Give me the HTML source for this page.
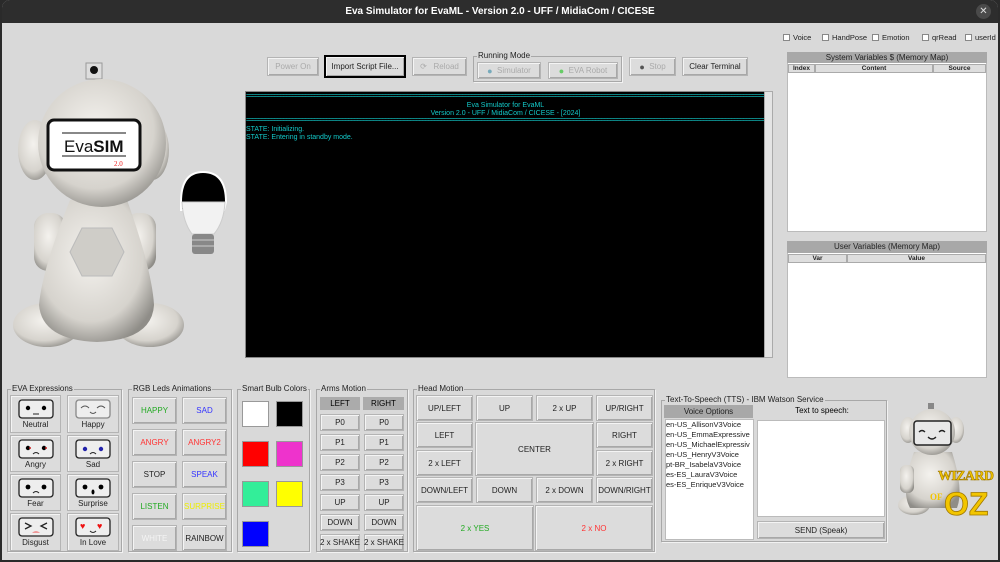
<!DOCTYPE html>
<html><head><meta charset="utf-8">
<style>
*{box-sizing:border-box;margin:0;padding:0}
body{width:1000px;height:562px;background:#2a2a2a;font-family:"Liberation Sans",Arial,sans-serif;overflow:hidden;position:relative}
.win{position:absolute;left:2px;top:0;width:996px;height:560px;background:#d9d9d9;border-radius:8px 8px 0 0;overflow:hidden}
.title{position:absolute;left:0;top:0;width:996px;height:23px;background:#2d2d2d;color:#fff;font-weight:bold;font-size:10px;text-align:center;line-height:23px}
.close{position:absolute;right:7px;top:4px;width:15px;height:15px;border-radius:50%;background:#4a4a4a;color:#ddd;font-size:10px;line-height:15px;text-align:center;font-weight:normal}
.a{position:absolute}
.btn{position:absolute;background:#dcdcdc;border:1px solid #b4b4b4;box-shadow:inset 1px 1px 0 #f4f4f4,inset -1px -1px 0 #a8a8a8;font-size:8px;color:#222;text-align:center;display:flex;align-items:center;justify-content:center;white-space:nowrap}
.dis{color:#aaa}
.grp{position:absolute;border:1px solid #a8a8a8;box-shadow:1px 1px 0 #f2f2f2}
.gl{position:absolute;top:-6px;left:3px;background:#d9d9d9;font-size:8px;color:#222;padding:0 1px;white-space:nowrap}
.cb{position:absolute;font-size:7.5px;color:#222;top:33px}
.cb i{display:inline-block;width:7px;height:7px;background:#fff;border:1px solid #888;vertical-align:-1px;margin-right:3px}
.hdr{position:absolute;background:#a8a8a8;color:#222;font-size:8px;text-align:center}
.col{position:absolute;background:#dedede;border:1px solid #aaa;font-size:6.5px;font-weight:bold;text-align:center;color:#222}
.term{position:absolute;left:243px;top:91px;width:521px;height:267px;background:#000;border:1px solid #888;color:#13c9c9;font-size:7px;line-height:8px}
.exp{position:absolute;background:#dcdcdc;border:1px solid #b4b4b4;box-shadow:inset 1px 1px 0 #f4f4f4;font-size:8px;text-align:center;color:#222}
.exp svg{display:block;margin:3px auto 1px}
.sq{position:absolute;width:27px;height:26px;border:1px solid #999}
</style></head><body>
<div class="win">
<div class="title">Eva Simulator for EvaML - Version 2.0 - UFF / MidiaCom / CICESE<div class="close">✕</div></div>

<div class="cb" style="left:781px"><i></i>Voice</div>
<div class="cb" style="left:820px"><i></i>HandPose</div>
<div class="cb" style="left:870px"><i></i>Emotion</div>
<div class="cb" style="left:920px"><i></i>qrRead</div>
<div class="cb" style="left:963px"><i></i>userId</div>

<!-- robot -->
<svg class="a" style="left:0;top:60px" width="240" height="290" viewBox="0 60 240 290">
<defs><radialGradient id="g" cx="45%" cy="40%" r="65%"><stop offset="0" stop-color="#f4f2ee"/><stop offset="0.7" stop-color="#d6d3cd"/><stop offset="1" stop-color="#8f8d88"/></radialGradient></defs>
<rect x="84" y="63" width="16" height="16" fill="#ddd" stroke="#999"/>
<circle cx="92" cy="70" r="4" fill="#111"/>
<ellipse cx="45" cy="325" rx="34" ry="22" fill="url(#g)"/>
<ellipse cx="148" cy="325" rx="34" ry="22" fill="url(#g)"/>
<rect x="32" y="213" width="32" height="58" rx="14" fill="url(#g)"/>
<rect x="122" y="213" width="32" height="58" rx="14" fill="url(#g)"/>
<path d="M68 200 L125 200 Q150 270 152 305 Q150 340 95 342 Q40 340 37 305 Q40 270 68 200Z" fill="url(#g)"/>
<polygon points="80,228 110,228 122,252 110,276 80,276 68,252" fill="#cfcdc8" stroke="#bbb"/>
<ellipse cx="33" cy="150" rx="17" ry="30" fill="url(#g)"/>
<ellipse cx="150" cy="150" rx="17" ry="30" fill="url(#g)"/>
<circle cx="100" cy="143" r="64" fill="url(#g)"/>
<rect x="46" y="120" width="92" height="50" rx="6" fill="#fff" stroke="#111" stroke-width="3"/>
<line x1="60" y1="133" x2="124" y2="133" stroke="#111"/>
<line x1="60" y1="156" x2="124" y2="156" stroke="#111"/>
<text x="62" y="152" font-family="Liberation Sans" font-size="17" fill="#111">Eva<tspan font-weight="bold">SIM</tspan></text>
<text x="112" y="166" font-size="7" fill="#e22" font-family="Liberation Serif">2.0</text>
<path d="M179 202 Q179 172 201 172 Q224 172 224 202 L222 210 L179 210Z" fill="#000" stroke="#fff" stroke-width="2"/>
<path d="M180 202 L223 202 Q222 222 212 234 L190 234 Q181 222 180 202Z" fill="#f2f2f2" stroke="#ccc"/>
<rect x="190" y="234" width="22" height="20" rx="3" fill="#888"/>
<line x1="190" y1="240" x2="212" y2="240" stroke="#ccc"/><line x1="190" y1="246" x2="212" y2="246" stroke="#ccc"/>
</svg>

<div class="btn dis" style="left:265px;top:57px;width:52px;height:19px">Power On</div>
<div class="btn" style="left:322px;top:55px;width:82px;height:23px;border:2px solid #000">Import Script File...</div>
<div class="btn dis" style="left:410px;top:57px;width:55px;height:19px">⟳&nbsp;&nbsp; Reload</div>
<div class="grp" style="left:471px;top:56px;width:149px;height:26px"><div class="gl" style="color:#222">Running Mode</div></div>
<div class="btn dis" style="left:475px;top:62px;width:64px;height:17px"><span style="color:#7ab;font-size:9px">●</span>&nbsp; Simulator</div>
<div class="btn dis" style="left:546px;top:62px;width:70px;height:17px"><span style="color:#6c6;font-size:9px">●</span>&nbsp; EVA Robot</div>
<div class="btn dis" style="left:627px;top:57px;width:47px;height:19px"><span style="color:#555;font-size:9px">●</span>&nbsp; Stop</div>
<div class="btn" style="left:680px;top:57px;width:66px;height:19px">Clear Terminal</div>

<div class="term">
<div style="overflow:hidden;white-space:nowrap;height:6px;line-height:6px;margin-top:2px;letter-spacing:-1px">================================================================================================================================================================================</div>
<div style="text-align:center;margin-top:2px">Eva Simulator for EvaML<br>Version 2.0 - UFF / MidiaCom / CICESE - [2024]</div>
<div style="overflow:hidden;white-space:nowrap;height:6px;line-height:6px;letter-spacing:-1px">================================================================================================================================================================================</div>
<div style="margin-top:2px">STATE: Initializing.<br>STATE: Entering in standby mode.</div>
</div>
<div class="a" style="left:762px;top:91px;width:9px;height:267px;background:#e4e4e4;border:1px solid #aaa"></div>

<div class="a" style="left:785px;top:52px;width:200px;height:180px;background:#fff;border:1px solid #bbb"></div>
<div class="hdr" style="left:785px;top:52px;width:200px;height:11px;line-height:11px">System Variables $ (Memory Map)</div>
<div class="col" style="left:786px;top:64px;width:27px;height:9px">Index</div>
<div class="col" style="left:813px;top:64px;width:118px;height:9px">Content</div>
<div class="col" style="left:931px;top:64px;width:53px;height:9px">Source</div>

<div class="a" style="left:785px;top:241px;width:200px;height:137px;background:#fff;border:1px solid #bbb"></div>
<div class="hdr" style="left:785px;top:241px;width:200px;height:12px;line-height:12px">User Variables (Memory Map)</div>
<div class="col" style="left:786px;top:254px;width:59px;height:9px">Var</div>
<div class="col" style="left:845px;top:254px;width:139px;height:9px">Value</div>

<!-- EVA Expressions -->
<div class="grp" style="left:5px;top:389px;width:115px;height:163px"><div class="gl">EVA Expressions</div></div>
<div class="exp" style="left:8px;top:395px;width:51px;height:38px"><svg width="36" height="20"><rect x="1" y="1" width="34" height="18" rx="3" fill="#eee" stroke="#222" stroke-width="1.3"/><circle cx="10" cy="9" r="2.2"/><circle cx="26" cy="9" r="2.2"/><line x1="15" y1="15" x2="21" y2="15" stroke="#222"/></svg>Neutral</div>
<div class="exp" style="left:65px;top:395px;width:52px;height:38px"><svg width="36" height="20"><rect x="1" y="1" width="34" height="18" rx="3" fill="#eee" stroke="#888" stroke-width="1.3"/><path d="M6 9 Q10 5 14 9 M22 9 Q26 5 30 9 M15 13 Q18 16 21 13" fill="none" stroke="#555"/></svg>Happy</div>
<div class="exp" style="left:8px;top:435px;width:51px;height:37px"><svg width="36" height="20"><rect x="1" y="1" width="34" height="18" rx="3" fill="#eee" stroke="#222" stroke-width="1.3"/><circle cx="10" cy="9" r="2.2"/><circle cx="26" cy="9" r="2.2"/><circle cx="12" cy="9" r="1" fill="#c22"/><circle cx="28" cy="9" r="1" fill="#c22"/><path d="M15 15 Q18 12 21 15" fill="none" stroke="#222"/></svg>Angry</div>
<div class="exp" style="left:65px;top:435px;width:52px;height:37px"><svg width="36" height="20"><rect x="1" y="1" width="34" height="18" rx="3" fill="#eee" stroke="#222" stroke-width="1.3"/><circle cx="10" cy="10" r="2.2" fill="#22a"/><circle cx="26" cy="10" r="2.2" fill="#22a"/><path d="M15 15 Q18 12 21 15" fill="none" stroke="#222"/></svg>Sad</div>
<div class="exp" style="left:8px;top:474px;width:51px;height:37px"><svg width="36" height="20"><rect x="1" y="1" width="34" height="18" rx="3" fill="#eee" stroke="#222" stroke-width="1.3"/><circle cx="10" cy="9" r="2.4"/><circle cx="26" cy="9" r="2.4"/><path d="M15 15 Q18 12 21 15" fill="none" stroke="#222"/></svg>Fear</div>
<div class="exp" style="left:65px;top:474px;width:52px;height:37px"><svg width="36" height="20"><rect x="1" y="1" width="34" height="18" rx="3" fill="#eee" stroke="#222" stroke-width="1.3"/><circle cx="10" cy="9" r="2.4"/><circle cx="26" cy="9" r="2.4"/><ellipse cx="18" cy="14" rx="1.5" ry="2.5"/></svg>Surprise</div>
<div class="exp" style="left:8px;top:513px;width:51px;height:38px"><svg width="36" height="20"><rect x="1" y="1" width="34" height="18" rx="3" fill="#eee" stroke="#222" stroke-width="1.3"/><path d="M7 6 L13 9 L7 12 M29 6 L23 9 L29 12" fill="none" stroke="#222" stroke-width="1.3"/><path d="M14 16 Q18 12 22 16" fill="#e99"/></svg>Disgust</div>
<div class="exp" style="left:65px;top:513px;width:52px;height:38px"><svg width="36" height="20"><rect x="1" y="1" width="34" height="18" rx="3" fill="#eee" stroke="#222" stroke-width="1.3"/><text x="5" y="12" font-size="9" fill="#e11">♥</text><text x="22" y="12" font-size="9" fill="#e11">♥</text><path d="M15 14 Q18 17 21 14" fill="none" stroke="#222"/></svg>In Love</div>

<!-- RGB -->
<div class="grp" style="left:126px;top:389px;width:104px;height:163px"><div class="gl">RGB Leds Animations</div></div>
<div class="btn" style="left:130px;top:397px;width:45px;height:27px;color:#2a2">HAPPY</div>
<div class="btn" style="left:180px;top:397px;width:45px;height:27px;color:#33f">SAD</div>
<div class="btn" style="left:130px;top:429px;width:45px;height:27px;color:#f33">ANGRY</div>
<div class="btn" style="left:180px;top:429px;width:45px;height:27px;color:#f33">ANGRY2</div>
<div class="btn" style="left:130px;top:461px;width:45px;height:27px">STOP</div>
<div class="btn" style="left:180px;top:461px;width:45px;height:27px;color:#33f">SPEAK</div>
<div class="btn" style="left:130px;top:493px;width:45px;height:27px;color:#2a2">LISTEN</div>
<div class="btn" style="left:180px;top:493px;width:45px;height:27px;color:#ee0">SURPRISE</div>
<div class="btn" style="left:130px;top:525px;width:45px;height:26px;color:#f4f4f4">WHITE</div>
<div class="btn" style="left:180px;top:525px;width:45px;height:26px">RAINBOW</div>

<!-- Bulb -->
<div class="grp" style="left:235px;top:389px;width:73px;height:163px"><div class="gl">Smart Bulb Colors</div></div>
<div class="sq" style="left:240px;top:401px;background:#fff"></div>
<div class="sq" style="left:274px;top:401px;background:#000"></div>
<div class="sq" style="left:240px;top:441px;background:#f00"></div>
<div class="sq" style="left:274px;top:441px;background:#e3c"></div>
<div class="sq" style="left:240px;top:481px;background:#3e9"></div>
<div class="sq" style="left:274px;top:481px;background:#ff0"></div>
<div class="sq" style="left:240px;top:521px;background:#00f"></div>

<!-- Arms -->
<div class="grp" style="left:314px;top:389px;width:92px;height:163px"><div class="gl">Arms Motion</div></div>
<div class="a" style="left:318px;top:397px;width:40px;height:13px;background:#ababab;font-size:8px;text-align:center;line-height:13px">LEFT</div>
<div class="a" style="left:361px;top:397px;width:41px;height:13px;background:#ababab;font-size:8px;text-align:center;line-height:13px">RIGHT</div>
<div class="btn" style="left:318px;top:414px;width:40px;height:17px">P0</div><div class="btn" style="left:362px;top:414px;width:40px;height:17px">P0</div>
<div class="btn" style="left:318px;top:434px;width:40px;height:17px">P1</div><div class="btn" style="left:362px;top:434px;width:40px;height:17px">P1</div>
<div class="btn" style="left:318px;top:454px;width:40px;height:17px">P2</div><div class="btn" style="left:362px;top:454px;width:40px;height:17px">P2</div>
<div class="btn" style="left:318px;top:474px;width:40px;height:17px">P3</div><div class="btn" style="left:362px;top:474px;width:40px;height:17px">P3</div>
<div class="btn" style="left:318px;top:494px;width:40px;height:17px">UP</div><div class="btn" style="left:362px;top:494px;width:40px;height:17px">UP</div>
<div class="btn" style="left:318px;top:514px;width:40px;height:17px">DOWN</div><div class="btn" style="left:362px;top:514px;width:40px;height:17px">DOWN</div>
<div class="btn" style="left:318px;top:534px;width:40px;height:17px">2 x SHAKE</div><div class="btn" style="left:362px;top:534px;width:40px;height:17px">2 x SHAKE</div>

<!-- Head -->
<div class="grp" style="left:411px;top:389px;width:242px;height:163px"><div class="gl">Head Motion</div></div>
<div class="btn" style="left:414px;top:395px;width:57px;height:26px">UP/LEFT</div>
<div class="btn" style="left:474px;top:395px;width:57px;height:26px">UP</div>
<div class="btn" style="left:534px;top:395px;width:57px;height:26px">2 x UP</div>
<div class="btn" style="left:594px;top:395px;width:57px;height:26px">UP/RIGHT</div>
<div class="btn" style="left:414px;top:422px;width:57px;height:26px">LEFT</div>
<div class="btn" style="left:473px;top:422px;width:119px;height:54px">CENTER</div>
<div class="btn" style="left:594px;top:422px;width:57px;height:26px">RIGHT</div>
<div class="btn" style="left:414px;top:450px;width:57px;height:26px">2 x LEFT</div>
<div class="btn" style="left:594px;top:450px;width:57px;height:26px">2 x RIGHT</div>
<div class="btn" style="left:414px;top:477px;width:57px;height:26px">DOWN/LEFT</div>
<div class="btn" style="left:474px;top:477px;width:57px;height:26px">DOWN</div>
<div class="btn" style="left:534px;top:477px;width:57px;height:26px">2 x DOWN</div>
<div class="btn" style="left:594px;top:477px;width:57px;height:26px">DOWN/RIGHT</div>
<div class="btn" style="left:414px;top:505px;width:118px;height:46px;color:#2a2">2 x YES</div>
<div class="btn" style="left:533px;top:505px;width:118px;height:46px;color:#f33">2 x NO</div>

<!-- TTS -->
<div class="grp" style="left:659px;top:400px;width:226px;height:142px"><div class="gl">Text-To-Speech (TTS) - IBM Watson Service</div></div>
<div class="hdr" style="left:662px;top:405px;width:89px;height:13px;line-height:13px">Voice Options</div>
<div class="a" style="left:663px;top:419px;width:89px;height:121px;background:#fff;border:1px solid #bbb;font-size:7.5px;line-height:10px;color:#222;overflow:hidden;white-space:nowrap">en-US_AllisonV3Voice<br>en-US_EmmaExpressive<br>en-US_MichaelExpressiv<br>en-US_HenryV3Voice<br>pt-BR_IsabelaV3Voice<br>es-ES_LauraV3Voice<br>es-ES_EnriqueV3Voice</div>
<div class="a" style="left:756px;top:406px;width:128px;font-size:8px;text-align:center">Text to speech:</div>
<div class="a" style="left:755px;top:420px;width:128px;height:97px;background:#fff;border:1px solid #bbb"></div>
<div class="btn" style="left:755px;top:521px;width:128px;height:18px">SEND (Speak)</div>

<!-- wizard robot -->
<svg class="a" style="left:888px;top:400px" width="112" height="120" viewBox="888 400 112 120">
<defs><radialGradient id="g2" cx="45%" cy="40%" r="65%"><stop offset="0" stop-color="#f4f2ee"/><stop offset="0.7" stop-color="#d6d3cd"/><stop offset="1" stop-color="#8f8d88"/></radialGradient></defs>
<rect x="926" y="403" width="6" height="6" fill="#888"/>
<ellipse cx="912" cy="505" rx="16" ry="10" fill="url(#g2)"/>
<path d="M912 452 L950 452 Q962 490 955 508 L908 508 Q898 490 912 452Z" fill="url(#g2)"/>
<rect x="898" y="465" width="14" height="28" rx="6" fill="url(#g2)"/>
<ellipse cx="906" cy="430" rx="8" ry="13" fill="url(#g2)"/>
<ellipse cx="954" cy="430" rx="8" ry="13" fill="url(#g2)"/>
<circle cx="930" cy="432" r="23" fill="url(#g2)"/>
<rect x="912" y="421" width="37" height="24" rx="3" fill="#e8e8e8" stroke="#222" stroke-width="1.5"/>
<path d="M917 432 Q920 429 923 432 M937 432 Q940 429 943 432 M926 437 Q930 441 934 437" fill="none" stroke="#222" stroke-width="1.3"/>
<text x="936" y="480" font-family="Liberation Serif" font-weight="bold" font-size="14" fill="#f2c500" stroke="#a07800" stroke-width="0.6" textLength="56">WIZARD</text>
<text x="928" y="500" font-family="Liberation Serif" font-weight="bold" font-size="9" fill="#f2c500">OF</text>
<text x="942" y="515" font-family="Liberation Sans" font-weight="bold" font-size="32" fill="#f2c500" stroke="#a07800" stroke-width="0.8">OZ</text>
</svg>
</div>
</body></html>
